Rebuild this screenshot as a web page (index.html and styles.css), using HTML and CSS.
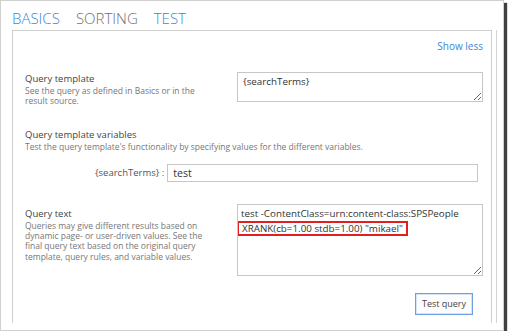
FILE: index.html
```html
<!DOCTYPE html>
<html lang="en">
<head>
    <meta charset="UTF-8">
    <meta name="viewport" content="width=device-width, initial-scale=1.0">
    <title>Query builder - Test</title>
    <link rel="stylesheet" href="styles.css">
</head>
<body>
    <div class="frame">
        <div class="tabs">
            <span class="tab tab-blue">BASICS</span>
            <span class="tab">SORTING</span>
            <span class="tab tab-blue">TEST</span>
        </div>
        <div class="shell">
            <div class="panel">
                <div class="show-less">Show less</div>

                <div class="row row-template">
                    <div class="info">
                        <div class="label">Query template</div>
                        <div class="desc">See the query as defined in Basics or in the result source.</div>
                    </div>
                    <div class="box box-template">{searchTerms}</div>
                </div>

                <div class="block">
                    <div class="label">Query template variables</div>
                    <div class="desc">Test the query template's functionality by specifying values for the different variables.</div>
                    <div class="var-row">
                        <span class="var-name">{searchTerms} :</span>
                        <div class="input">test</div>
                    </div>
                </div>

                <div class="row row-text">
                    <div class="info info-text">
                        <div class="label">Query text</div>
                        <div class="desc">Queries may give different results based on dynamic page- or user-driven values. See the final query text based on the original query template, query rules, and variable values.</div>
                    </div>
                    <div class="box box-text">
                        <div class="line">test -ContentClass=urn:content-class:SPSPeople</div>
                        <div class="line"><span class="highlight">XRANK(cb=1.00 stdb=1.00) "mikael"</span></div>
                    </div>
                </div>

                <div class="actions">
                    <button class="btn">Test query</button>
                </div>
            </div>
        </div>
    </div>
</body>
</html>
```

FILE: styles.css
```css
body {
    margin: 0;
    background: #fff;
    font-family: "Open Sans", "DejaVu Sans", sans-serif;
}

.frame {
    box-sizing: border-box;
    width: 504px;
    height: 331px;
    border: 1px solid #d0d0d0;
    background: #fff;
    box-shadow: 3px 3px 1px rgba(0, 0, 0, 0.75);
    overflow: hidden;
}

.tabs {
    display: flex;
    gap: 16px;
    height: 29px;
    padding: 8px 0 0 11px;
    box-sizing: border-box;
}
.tab {
    font-size: 15px;
    font-weight: 300;
    line-height: 18px;
    color: #6f6f6f;
}
.tab-blue {
    color: #3b86d6;
}

.shell {
    margin-left: 11px;
    width: 485px;
    height: 293px;
    border-right: 1px solid #d4d4d4;
    box-sizing: border-box;
}
.panel {
    box-sizing: border-box;
    width: 480px;
    height: 293px;
    border: 1px solid #cfcfcf;
    border-bottom: none;
    padding: 9px 8px 0 12px;
}

.show-less {
    text-align: right;
    font-size: 10px;
    line-height: 12px;
    color: #3b86d6;
}

.row {
    display: flex;
    justify-content: space-between;
}
.row-template {
    margin-top: 20px;
}
.info {
    width: 190px;
    padding-top: 1px;
}
.info-text {
    padding-top: 4px;
}

.label {
    font-size: 9.5px;
    line-height: 11px;
    color: #444;
}
.desc {
    font-size: 8.5px;
    line-height: 10.3px;
    color: #777;
    margin-top: 2px;
}

.box {
    box-sizing: border-box;
    width: 246px;
    border: 1px solid #c6c6c6;
    padding: 2px 5px;
    font-size: 9.8px;
    line-height: 14px;
    color: #333;
    resize: vertical;
    overflow: hidden;
}
.box-template {
    height: 30px;
}
.box-text {
    height: 72px;
    padding: 1.5px 3px;
    line-height: 15px;
}
.highlight {
    display: inline-block;
    border: 2px solid #e41e1e;
    margin-left: -4px;
    padding: 0 3px 0 3px;
    line-height: 11px;
}

.block {
    margin-top: 22px;
}
.var-row {
    display: flex;
    align-items: center;
    gap: 3px;
    margin-top: 12px;
    padding-left: 70px;
}
.var-name {
    font-size: 9.5px;
    color: #555;
}
.input {
    box-sizing: border-box;
    width: 311px;
    height: 18px;
    border: 1px solid #c6c6c6;
    padding: 0 5px;
    font-size: 10.5px;
    line-height: 16px;
    color: #333;
}

.row-text {
    margin-top: 22px;
}

.actions {
    display: flex;
    justify-content: flex-end;
    margin-top: 17px;
    padding-right: 10px;
}
.btn {
    box-sizing: border-box;
    width: 58px;
    height: 22px;
    border: 1px solid #6d9de2;
    box-shadow: inset 0 0 0 1px #d6e4f7;
    background: #fdfdfd;
    font-family: "Open Sans", "DejaVu Sans", sans-serif;
    font-size: 9px;
    color: #444;
    padding: 0;
}
```
